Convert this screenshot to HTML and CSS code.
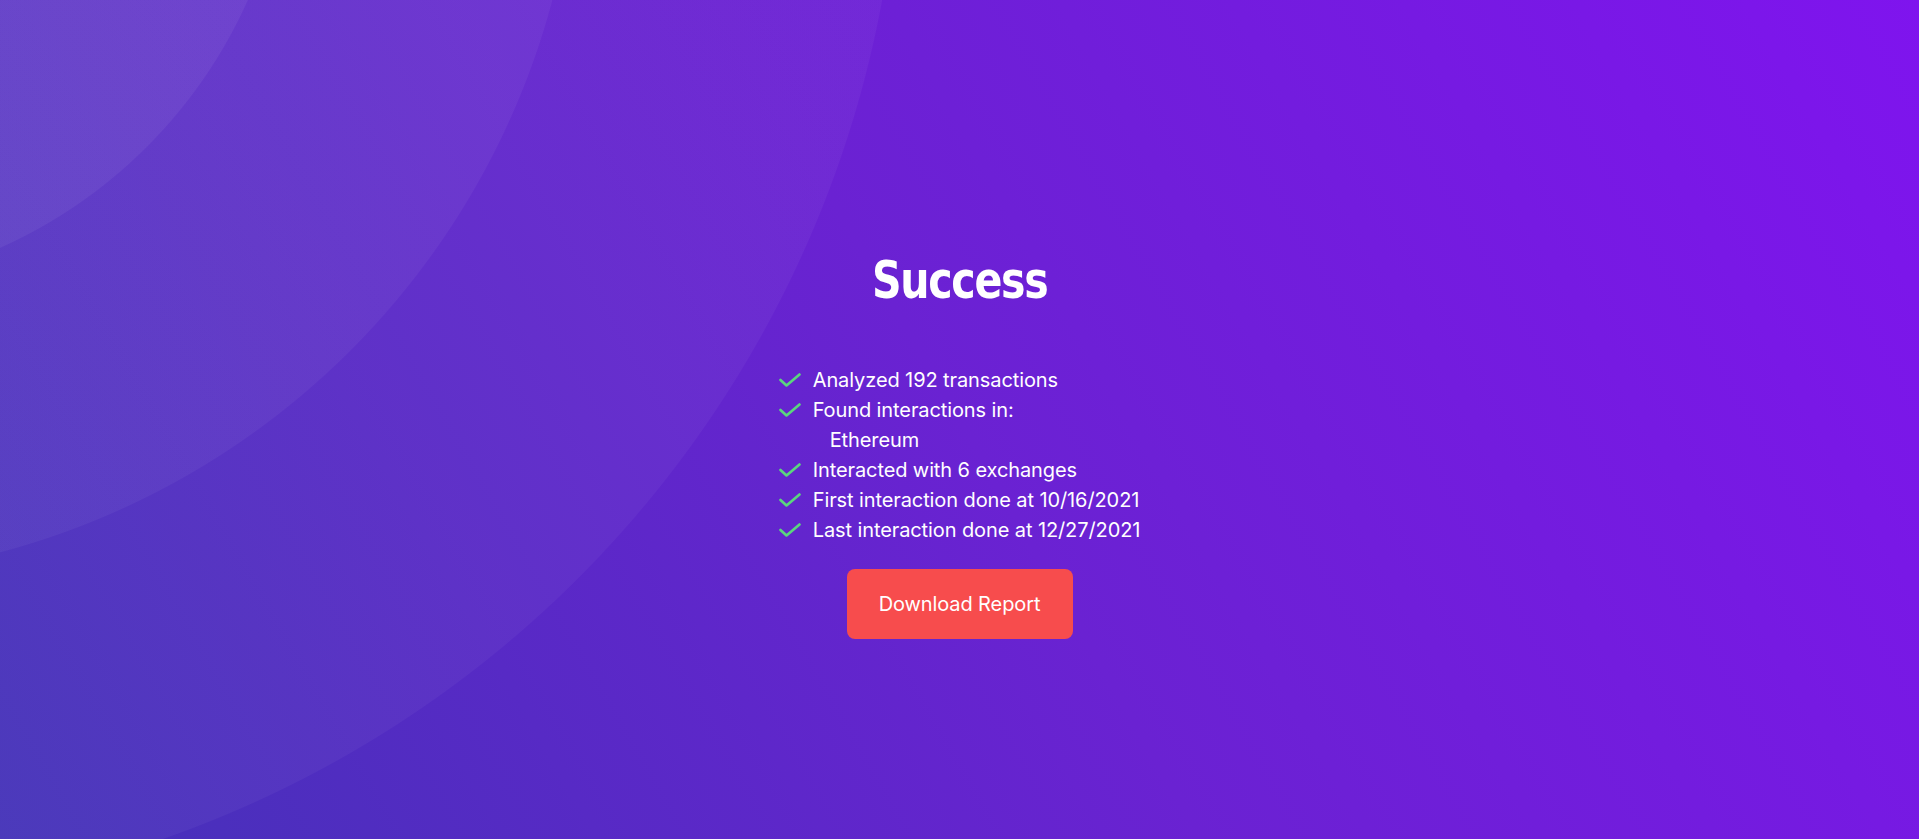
FILE: index.html
```html
<!DOCTYPE html>
<html lang="en">
<head>
<meta charset="utf-8">
<title>Success</title>
<link rel="stylesheet" href="styles.css">
</head>
<body>
<main class="page">
  <h1 class="title">Success</h1>
  <ul class="results">
    <li class="item"><svg class="check" viewBox="0 0 22 14"><path d="M1.5 7 L7.5 12.5 L20.5 1.5"/></svg><span>Analyzed 192 transactions</span></li>
    <li class="item"><svg class="check" viewBox="0 0 22 14"><path d="M1.5 7 L7.5 12.5 L20.5 1.5"/></svg><span>Found interactions in:</span></li>
    <li class="item sub"><span>Ethereum</span></li>
    <li class="item"><svg class="check" viewBox="0 0 22 14"><path d="M1.5 7 L7.5 12.5 L20.5 1.5"/></svg><span>Interacted with 6 exchanges</span></li>
    <li class="item"><svg class="check" viewBox="0 0 22 14"><path d="M1.5 7 L7.5 12.5 L20.5 1.5"/></svg><span>First interaction done at 10/16/2021</span></li>
    <li class="item"><svg class="check" viewBox="0 0 22 14"><path d="M1.5 7 L7.5 12.5 L20.5 1.5"/></svg><span>Last interaction done at 12/27/2021</span></li>
  </ul>
  <button class="download" type="button">Download Report</button>
</main>
</body>
</html>
```

FILE: styles.css
```css
html, body {
  margin: 0;
  padding: 0;
  height: 100%;
}

body {
  font-family: "Inter", "Liberation Sans", sans-serif;
  color: #ffffff;
  overflow: hidden;
  background:
    radial-gradient(circle at -200px -200px, rgba(255,255,255,0.05) 490px, rgba(255,255,255,0) 491px),
    radial-gradient(circle at -200px -200px, rgba(255,255,255,0.045) 778px, rgba(255,255,255,0) 779px),
    radial-gradient(circle at -200px -200px, rgba(255,255,255,0.04) 1100px, rgba(255,255,255,0) 1101px),
    linear-gradient(60deg, #4432b8 0%, #6a22d2 50%, #7f14ee 100%);
}

.page {
  height: 839px;
  box-sizing: border-box;
  display: flex;
  flex-direction: column;
  align-items: center;
  padding-top: 249px;
}

.title {
  margin: 0;
  font-family: "DejaVu Sans Condensed", "DejaVu Sans", sans-serif;
  font-weight: 700;
  font-size: 52px;
  line-height: 62px;
  letter-spacing: -1.5px;
  transform: scaleX(0.88);
}

.results {
  list-style: none;
  margin: 54px 0 0;
  padding: 0;
}

.item {
  display: flex;
  align-items: center;
  gap: 12px;
  height: 30px;
  font-size: 20px;
  letter-spacing: -0.1px;
}

.item.sub {
  padding-left: 51px;
}

.check {
  width: 22px;
  height: 14px;
  fill: none;
  stroke: #5bd67e;
  stroke-width: 2.6;
  stroke-linecap: round;
  stroke-linejoin: round;
}

.download {
  margin-top: 24px;
  width: 226px;
  height: 70px;
  border: none;
  border-radius: 8px;
  background: #f74c4d;
  color: #ffffff;
  font-family: "Inter", "Liberation Sans", sans-serif;
  font-size: 20px;
  letter-spacing: -0.1px;
  cursor: pointer;
}
```
